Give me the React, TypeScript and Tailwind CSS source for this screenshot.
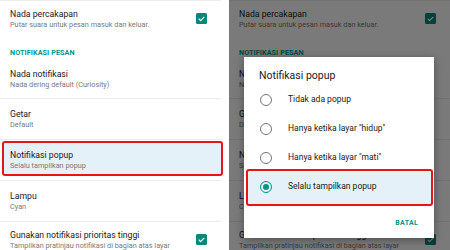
import React from "react";

const Check = () => (
  <div className="w-[11px] h-[11px] rounded-[1.5px] flex items-center justify-center mt-[4px] mr-[14px] shrink-0 bg-[#00897b]">
    <svg width="9" height="9" viewBox="0 0 24 24">
      <path d="M4.5 12.5l5 5 10-10" fill="none" stroke="white" strokeWidth="3.2" />
    </svg>
  </div>
);

const Divider = () => <div className="h-px bg-[#ececec]" />;

const Row = ({ title, sub, pt, h, check, children }: { title: string; sub: string; pt: string; h: string; check?: boolean; children?: React.ReactNode }) => (
  <div className={`relative flex items-start justify-between pl-[10px] ${pt} ${h}`}>
    {children}
    <div className="relative">
      <div className="text-[8.7px] leading-[11px] text-[#212121]">{title}</div>
      <div className="text-[7.3px] leading-[10px] text-[#7a7a7a] whitespace-nowrap">{sub}</div>
    </div>
    {check && <Check />}
  </div>
);

const List = ({ highlight }: { highlight?: boolean }) => (
  <div className="w-[221px] shrink-0 relative bg-white">
    <Divider />
    <Row title="Nada percakapan" sub="Putar suara untuk pesan masuk dan keluar." pt="pt-[8px]" h="h-[36px]" check />
    <div className="h-[25px] pt-[11px] pl-[10px] text-[7.2px] leading-[10px] font-bold text-[#009688] tracking-[0.1px]">NOTIFIKASI PESAN</div>
    <Row title="Nada notifikasi" sub="Nada dering default (Curiosity)" pt="pt-[7px]" h="h-[36px]" />
    <Divider />
    <Row title="Getar" sub="Default" pt="pt-[10px]" h="h-[40px]" />
    <Divider />
    <Row title="Notifikasi popup" sub="Selalu tampilkan popup" pt="pt-[10px]" h="h-[40px]">
      {highlight && (
        <div className="absolute left-[2px] top-[1px] w-[221px] h-[35px] rounded-[3px] border-2 border-[#e8141c] bg-[#e4f1f8]" />
      )}
    </Row>
    <Divider />
    <Row title="Lampu" sub="Cyan" pt="pt-[10px]" h="h-[40px]" />
    <Divider />
    <Row title="Gunakan notifikasi prioritas tinggi" sub="Tampilkan pratinjau notifikasi di bagian atas layar" pt="pt-[8px]" h="h-[40px]" check />
  </div>
);

const Radio = ({ on }: { on?: boolean }) =>
  on ? (
    <div className="w-[12px] h-[12px] rounded-full border-[1.5px] border-[#009688] flex items-center justify-center">
      <div className="w-[6px] h-[6px] rounded-full bg-[#009688]" />
    </div>
  ) : (
    <div className="w-[12px] h-[12px] rounded-full border-[1.5px] border-[#757575]" />
  );

const Option = ({ label, on, h }: { label: string; on?: boolean; h: string }) => (
  <div className={`relative flex items-center ${h}`}>
    {on && <div className="absolute left-[2px] top-[-3px] w-[187px] h-[37px] rounded-[3px] border-2 border-[#e8141c] bg-[#e4f1f8]" />}
    <div className="relative w-[44px] flex justify-center">
      <Radio on={on} />
    </div>
    <div className="relative text-[8.5px] text-[#212121] whitespace-nowrap">{label}</div>
  </div>
);

export default function App() {
  return (
    <div className="w-[450px] h-[250px] flex bg-white overflow-hidden" style={{ fontFamily: "Roboto, 'Noto Sans', sans-serif" }}>
      <List highlight />
      <div className="w-[8px] shrink-0" />
      <div className="relative w-[221px] shrink-0 overflow-hidden">
        <List />
        <div className="absolute inset-0 bg-[rgba(0,0,0,0.52)]" />
        <div className="absolute left-[15px] top-[57px] w-[190px] h-[181px] bg-white shadow-[0_2px_8px_rgba(0,0,0,0.35)] flex flex-col">
          <div className="h-[28px] pt-[12px] pl-[15px] text-[10.5px] leading-[14px] text-[#212121]">Notifikasi popup</div>
          <Option label="Tidak ada popup" h="h-[29px]" />
          <Option label={'Hanya ketika layar "hidup"'} h="h-[29px]" />
          <Option label={'Hanya ketika layar "mati"'} h="h-[29px]" />
          <Option label="Selalu tampilkan popup" on h="h-[29px]" />
          <div className="flex justify-end pr-[16px] pt-[17px] text-[7px] leading-[10px] font-bold text-[#009688] tracking-[0.3px]">BATAL</div>
        </div>
      </div>
    </div>
  );
}
